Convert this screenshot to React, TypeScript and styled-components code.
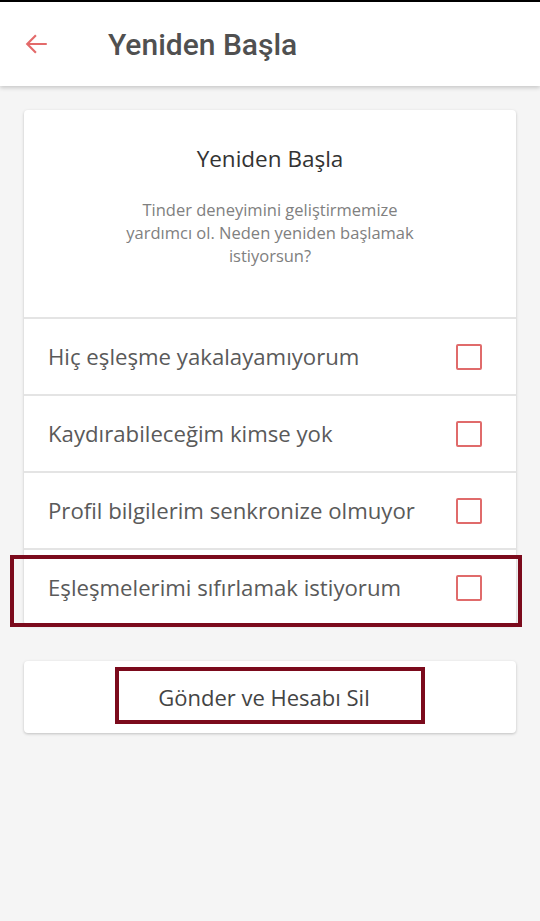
import styled, { createGlobalStyle } from 'styled-components';

const GlobalStyle = createGlobalStyle`
  html, body {
    margin: 0;
    padding: 0;
    background: #f5f5f5;
  }
  body {
    font-family: "Open Sans", sans-serif;
  }
`;

const Page = styled.div`
  min-height: 921px;
  background: #f5f5f5;
  border-top: 2px solid #000;
  box-sizing: border-box;
`;

const TopBar = styled.header`
  height: 84px;
  background: #fff;
  display: flex;
  align-items: center;
  padding-left: 24px;
  box-shadow: 0 2px 4px rgba(0, 0, 0, 0.18);
  position: relative;
`;

const BackButton = styled.button`
  border: 0;
  background: none;
  padding: 0;
  width: 26px;
  height: 26px;
  display: flex;
  align-items: center;
  justify-content: center;
  margin-right: 58px;
`;

const BarTitle = styled.h1`
  margin: 0;
  font-family: Roboto, sans-serif;
  font-weight: 500;
  font-size: 30px;
  color: #505050;
`;

const Content = styled.main`
  padding: 24px 24px 0;
  display: flex;
  flex-direction: column;
  gap: 36px;
`;

const Card = styled.section`
  background: #fff;
  border-radius: 4px;
  box-shadow: 0 1px 3px rgba(0, 0, 0, 0.22);
`;

const Intro = styled.div`
  height: 209px;
  box-sizing: border-box;
  padding: 34px 94px 0;
  text-align: center;
  border-bottom: 2px solid #e4e4e4;
`;

const CardTitle = styled.h2`
  margin: 0 0 24px;
  font-weight: 400;
  font-size: 22.5px;
  line-height: 30px;
  color: #333;
`;

const Lead = styled.p`
  margin: 0;
  font-size: 16.5px;
  line-height: 23px;
  color: #808080;
`;

const Reason = styled.label<{ $last?: boolean }>`
  height: 75px;
  display: flex;
  align-items: center;
  justify-content: space-between;
  padding: 0 34px 0 24px;
  border-bottom: ${p => (p.$last ? 'none' : '2px solid #e4e4e4')};
  font-size: 22.2px;
  color: #5a5a5a;
  position: relative;
`;

const Box = styled.span`
  width: 22px;
  height: 22px;
  border: 2px solid #e06b6b;
  border-radius: 2px;
`;

const Highlight = styled.span<{ $inset: string }>`
  position: absolute;
  inset: ${p => p.$inset};
  border: 4px solid #7b0a1c;
  pointer-events: none;
`;

const ActionCard = styled(Card)`
  height: 72px;
  display: flex;
  align-items: center;
  justify-content: center;
`;

const SubmitButton = styled.button`
  position: relative;
  border: 0;
  background: none;
  font-family: "Open Sans", sans-serif;
  font-size: 22px;
  color: #444;
  width: 310px;
  height: 57px;
  margin-bottom: 4px;
  padding: 4px 12px 0 0;
`;

const reasons = [
  'Hiç eşleşme yakalayamıyorum',
  'Kaydırabileceğim kimse yok',
  'Profil bilgilerim senkronize olmuyor',
  'Eşleşmelerimi sıfırlamak istiyorum',
];

export default function App() {
  return (
    <Page>
      <GlobalStyle />
      <TopBar>
        <BackButton aria-label="Geri">
          <svg width="26" height="26" viewBox="0 0 24 24" fill="none" stroke="#e36a6a" strokeWidth="2">
            <path d="M21 12H3M11 4l-8 8 8 8" />
          </svg>
        </BackButton>
        <BarTitle>Yeniden Başla</BarTitle>
      </TopBar>
      <Content>
        <Card>
          <Intro>
            <CardTitle>Yeniden Başla</CardTitle>
            <Lead>Tinder deneyimini geliştirmemize yardımcı ol. Neden yeniden başlamak istiyorsun?</Lead>
          </Intro>
          {reasons.map((r, i) => {
            const last = i === reasons.length - 1;
            return (
              <Reason key={r} $last={last}>
                {r}
                <Box />
                {last && <Highlight $inset="5px -6px -2px -14px" />}
              </Reason>
            );
          })}
        </Card>
        <ActionCard>
          <SubmitButton>
            Gönder ve Hesabı Sil
            <Highlight $inset="0" />
          </SubmitButton>
        </ActionCard>
      </Content>
    </Page>
  );
}
